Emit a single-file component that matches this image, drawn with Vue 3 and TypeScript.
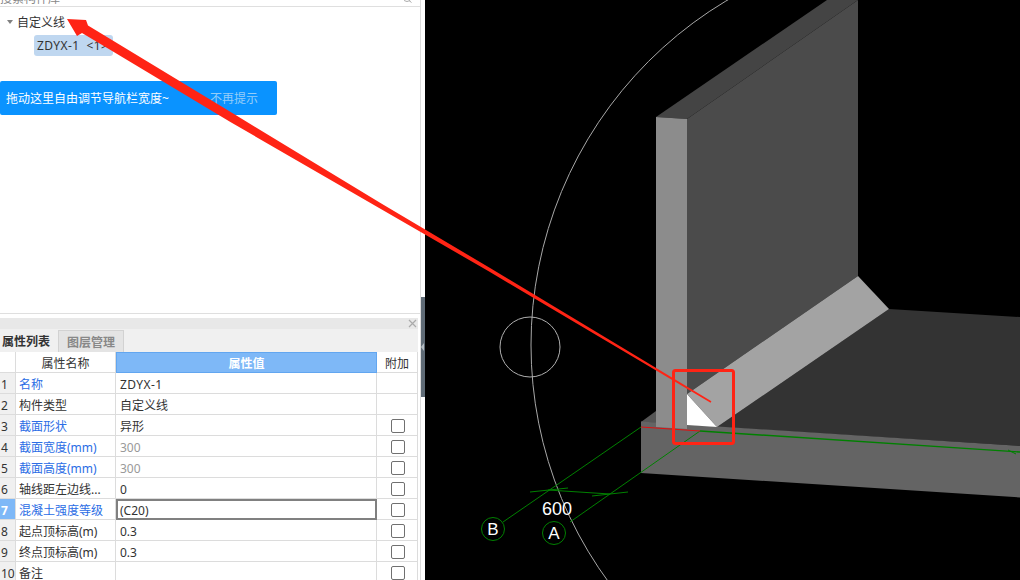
<template>
  <div class="app">
    <aside class="side">
      <div class="search">
        <span class="search__text">搜索构件库</span>
        <svg class="search__icon" width="8" height="3" viewBox="0 0 8 3">
          <circle cx="3" cy="-2" r="3.5" fill="none" stroke="#aaa" />
          <path d="M5 0.5 L7.5 2.5" stroke="#aaa" />
        </svg>
      </div>

      <div class="tree">
        <div class="tree__root"><i class="tree__arrow"></i>自定义线</div>
        <div class="tree__item">ZDYX-1&nbsp;&nbsp;&lt;1&gt;</div>
        <div class="tip">
          <span>拖动这里自由调节导航栏宽度~</span>
          <span class="tip__off">不再提示</span>
        </div>
      </div>

      <div class="panel">
        <div class="panel__head">
          <svg width="9" height="9" viewBox="0 0 9 9">
            <path d="M1 1 L8 8 M8 1 L1 8" stroke="#aaa" stroke-width="1.2" />
          </svg>
        </div>
        <div class="tabs">
          <div class="tab tab--on">属性列表</div>
          <div class="tab">图层管理</div>
        </div>
        <div class="grid">
          <div class="cell cell--idx cell--blank"></div>
          <div class="cell cell--head">属性名称</div>
          <div class="cell cell--head cell--value-head">属性值</div>
          <div class="cell cell--head">附加</div>

          <template v-for="(row, i) in rows" :key="row.name">
            <div class="cell cell--idx" :class="{ 'cell--idx-on': row.active }">{{ i + 1 }}</div>
            <div class="cell" :class="{ 'cell--blue': row.blue }">{{ row.name }}</div>
            <div
              class="cell cell--value"
              :class="{ 'cell--muted': row.muted, 'cell--edit': row.active, 'cell--wide': row.wide }"
            >{{ row.value }}</div>
            <div class="cell cell--check"><i v-if="row.check" class="box"></i></div>
          </template>
        </div>
      </div>
    </aside>

    <div class="split"><i class="split__grip"></i></div>

    <svg class="scene" viewBox="425 0 595 580">
      <circle cx="932" cy="345" r="401" fill="none" stroke="#a8a8a8" />
      <circle cx="530" cy="347" r="30" fill="none" stroke="#b0b0b0" />

      <polygon points="656,117 827,0 858,0 687,119" fill="#444" />
      <polygon points="687,119 858,0 858,276 687,394" fill="#4b4b4b" />
      <polygon points="889,309 1020,317 1020,446 717,427" fill="#333" />
      <polygon points="641,422 656,411 656,423" fill="#555" />
      <polygon points="641,421.5 1020,446 1020,497.5 641,473" fill="#646464" />
      <polygon points="656,117 687,119 687,429 656,427" fill="#8c8c8c" />
      <polygon points="858,276 889,309 717,427 687,394" fill="#a3a3a3" />
      <polygon points="687,394 717,427 687,425" fill="#fff" />

      <g fill="none" stroke="#008000">
        <path d="M700 431 L1020 452" stroke-width="1.4" />
        <path d="M1008 450 L1016 454" />
        <path d="M641 427 L503 522" />
        <path d="M700 431 L570 522" />
        <path d="M530 492 L568 488" />
        <path d="M592 496 L628 492" />
        <path d="M548 490 L610 494" />
        <circle cx="493" cy="529" r="11.5" />
        <circle cx="554" cy="533" r="11.5" />
      </g>
      <path d="M641 427 L700 431" stroke="#e01010" fill="none" />

      <text x="557" y="515" class="scene__num">600</text>
      <text x="493" y="535" class="scene__label">B</text>
      <text x="554" y="539" class="scene__label">A</text>
    </svg>

    <svg class="marks" viewBox="0 0 1020 580">
      <polygon
        points="67,19 86,20 88,25.6 235.2,114.8 381.3,203.6 490.9,268.5 711.4,401.3 710.6,402.7 489.1,271.5 378.7,207.8 230.8,122.2 108,48.5 82,33 77,36"
        fill="#ff2415"
      />
      <rect x="673.5" y="370.5" width="60" height="73" rx="2" fill="none" stroke="#ff2415" stroke-width="3" />
    </svg>
  </div>
</template>

<script setup lang="ts">
interface Row {
  name: string
  value: string
  blue?: boolean
  muted?: boolean
  active?: boolean
  check?: boolean
  wide?: boolean
}

const rows: Row[] = [
  { name: '名称', value: 'ZDYX-1', blue: true, wide: true },
  { name: '构件类型', value: '自定义线' },
  { name: '截面形状', value: '异形', blue: true, check: true },
  { name: '截面宽度(mm)', value: '300', blue: true, muted: true, check: true },
  { name: '截面高度(mm)', value: '300', blue: true, muted: true, check: true },
  { name: '轴线距左边线...', value: '0', check: true },
  { name: '混凝土强度等级', value: '(C20)', blue: true, active: true, check: true },
  { name: '起点顶标高(m)', value: '0.3', check: true },
  { name: '终点顶标高(m)', value: '0.3', check: true },
  { name: '备注', value: '', check: true },
]
</script>

<style>
html,
body {
  margin: 0;
  background: #000;
}
</style>

<style scoped>
.app {
  position: relative;
  display: flex;
  width: 1020px;
  height: 580px;
  overflow: hidden;
  font-family: "Noto Sans", "Noto Sans CJK SC", sans-serif;
  font-size: 12px;
  color: #333;
}

.side {
  display: flex;
  flex-direction: column;
  flex-shrink: 0;
  width: 420px;
  border-right: 1px solid #dcdcdc;
  background: #fff;
}

.search {
  display: flex;
  align-items: flex-end;
  justify-content: space-between;
  flex-shrink: 0;
  box-sizing: border-box;
  height: 7px;
  padding-right: 8px;
  border-bottom: 1px solid #dfdfdf;
  overflow: hidden;
  color: #888;
  line-height: 12px;
}

.search__text {
  flex-shrink: 0;
  margin-bottom: 1px;
}

.search__icon {
  align-self: flex-start;
}

.tree {
  position: relative;
  flex-shrink: 0;
  box-sizing: border-box;
  height: 307px;
  padding-top: 6px;
  border-bottom: 1px solid #dfdfdf;
}

.tree__root {
  display: flex;
  align-items: center;
  height: 18px;
  padding-left: 7px;
}

.tree__arrow {
  width: 0;
  height: 0;
  margin-right: 4px;
  border-style: solid;
  border-width: 4px 3px 0;
  border-color: #808080 transparent transparent;
}

.tree__item {
  box-sizing: border-box;
  width: 79px;
  height: 21px;
  margin: 4px 0 0 34px;
  padding-left: 3px;
  border-radius: 3px;
  background: #bfd7f0;
  letter-spacing: 0.4px;
  line-height: 21px;
  white-space: nowrap;
  overflow: hidden;
}

.tip {
  position: absolute;
  top: 74px;
  left: 0;
  display: flex;
  align-items: center;
  justify-content: space-between;
  box-sizing: border-box;
  width: 277px;
  height: 34px;
  padding: 0 19px 0 6px;
  border-radius: 2px;
  background: #0a93ff;
  color: #fff;
}

.tip__off {
  color: #95cdf8;
}

.panel {
  flex: 1;
  min-height: 0;
  margin: 4px 2px 0 0;
  background: #f0f0f0;
}

.panel__head {
  display: flex;
  align-items: center;
  justify-content: flex-end;
  height: 11px;
  padding-right: 1px;
  background: #e8e8e8;
}

.tabs {
  display: flex;
  height: 23px;
  box-sizing: border-box;
  padding-top: 1px;
  font-weight: 700;
}

.tab {
  box-sizing: border-box;
  width: 66px;
  border: 1px solid #d2d2d2;
  border-bottom: 0;
  background: #e4e4e4;
  color: #888;
  line-height: 23px;
  text-align: center;
}

.tab--on {
  width: 58px;
  border: 0;
  background: none;
  color: #333;
  line-height: 24px;
  text-align: left;
  padding-left: 2px;
}

.grid {
  display: grid;
  grid-template-columns: 16px 100px 261px 41px;
  grid-auto-rows: 21px;
  box-sizing: border-box;
  width: 418px;
  background: #fff;
  border-right: 1px solid #dcdcdc;
}

.cell {
  box-sizing: border-box;
  padding-left: 3px;
  border-right: 1px solid #dcdcdc;
  border-bottom: 1px solid #dcdcdc;
  line-height: 24px;
  white-space: nowrap;
  overflow: hidden;
}

.cell--idx {
  padding-left: 1px;
  background: #f0f0f0;
}

.cell--blank {
  background: #fff;
}

.cell--idx-on {
  background: #7eb8f7;
  color: #fff;
  font-weight: 700;
}

.cell--head {
  padding-left: 0;
  text-align: center;
}

.cell--value {
  padding-left: 4px;
}

.cell--value-head {
  border: 1px solid #62a6f0;
  background: #7eb8f7;
  color: #fff;
  font-weight: 700;
  line-height: 22px;
}

.cell--blue {
  color: #2b6de5;
}

.cell--muted {
  color: #999;
}

.cell--wide {
  letter-spacing: 0.4px;
}

.cell--edit {
  border: 2px solid #808080;
  padding-left: 2px;
  line-height: 20px;
}

.cell--check {
  display: flex;
  align-items: center;
  justify-content: center;
  padding: 2px 0 0;
  border-right: 0;
}

.box {
  box-sizing: border-box;
  width: 14px;
  height: 14px;
  border: 1px solid #707070;
  border-radius: 2px;
}

.split {
  position: relative;
  flex-shrink: 0;
  width: 4px;
  background: linear-gradient(#fff 297px, #5f6b76 297px, #5f6b76 397px, #fff 397px);
}

.split__grip {
  position: absolute;
  top: 343px;
  left: 0;
  width: 0;
  height: 0;
  border-style: solid;
  border-width: 4px 3px 4px 0;
  border-color: transparent #b4bcc2 transparent transparent;
}

.scene {
  flex: 1;
  height: 580px;
  background: #000;
}

.scene__num {
  fill: #fff;
  font-family: "Liberation Sans", sans-serif;
  font-size: 18px;
  text-anchor: middle;
}

.scene__label {
  fill: #fff;
  font-family: "Liberation Sans", sans-serif;
  font-size: 17px;
  text-anchor: middle;
}

.marks {
  position: absolute;
  top: 0;
  left: 0;
  width: 1020px;
  height: 580px;
  pointer-events: none;
}
</style>
